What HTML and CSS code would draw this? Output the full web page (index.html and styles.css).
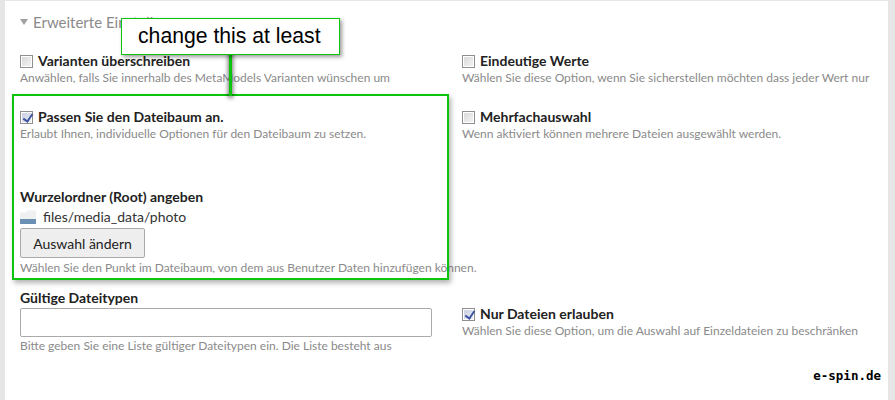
FILE: index.html
```html
<!DOCTYPE html>
<html lang="de">
<head>
<meta charset="utf-8">
<title>Erweiterte Einstellungen</title>
<link rel="stylesheet" href="styles.css">
</head>
<body>
<main class="panel">
  <h2 class="legend"><span class="caret"></span>Erweiterte Einstellungen</h2>
  <div class="grid">
    <div class="field row-a">
      <label class="check"><input type="checkbox">Varianten überschreiben</label>
      <p class="hint">Anwählen, falls Sie innerhalb des MetaModels Varianten wünschen um</p>
    </div>
    <div class="field row-a">
      <label class="check"><input type="checkbox">Eindeutige Werte</label>
      <p class="hint">Wählen Sie diese Option, wenn Sie sicherstellen möchten dass jeder Wert nur</p>
    </div>
    <div class="field row-b">
      <label class="check"><input type="checkbox" checked>Passen Sie den Dateibaum an.</label>
      <p class="hint">Erlaubt Ihnen, individuelle Optionen für den Dateibaum zu setzen.</p>
    </div>
    <div class="field row-b">
      <label class="check"><input type="checkbox">Mehrfachauswahl</label>
      <p class="hint">Wenn aktiviert können mehrere Dateien ausgewählt werden.</p>
    </div>
    <div class="field wide row-c">
      <div class="title">Wurzelordner (Root) angeben</div>
      <div class="path">
        <svg class="folder" width="16" height="14" viewBox="0 0 16 14"><path d="M0 2.5h6l1-2h8l1 2V9H0z" fill="#eef0f2"/><rect x="0" y="9" width="16" height="5" fill="#6a90b4"/></svg>
        <span>files/media_data/photo</span>
      </div>
      <button class="btn" type="button">Auswahl ändern</button>
      <p class="hint hint-wide">Wählen Sie den Punkt im Dateibaum, von dem aus Benutzer Daten hinzufügen können.</p>
    </div>
    <div class="field">
      <div class="title">Gültige Dateitypen</div>
      <input class="text" type="text">
      <p class="hint">Bitte geben Sie eine Liste gültiger Dateitypen ein. Die Liste besteht aus</p>
    </div>
    <div class="field offset">
      <label class="check"><input type="checkbox" checked>Nur Dateien erlauben</label>
      <p class="hint">Wählen Sie diese Option, um die Auswahl auf Einzeldateien zu beschränken</p>
    </div>
  </div>
</main>
<div class="frame"></div>
<div class="stem"></div>
<div class="callout">change this at least</div>
<div class="brand">e-spin.de</div>
</body>
</html>
```
FILE: styles.css
```css
* { box-sizing: border-box; }
html, body { margin: 0; height: 400px; overflow: hidden; }
body {
  background: #e6e6e6;
  padding: 1px 7px 0 5px;
  font-family: Lato, "Open Sans", sans-serif;
  color: #222;
  position: relative;
}
.panel { background: #fff; height: 399px; padding: 13px 15px 0; }
.legend {
  margin: 0;
  font-size: 15px;
  font-weight: 400;
  line-height: 16px;
  color: #8a8a8a;
  display: flex;
  align-items: center;
}
.caret {
  width: 0; height: 0;
  border: 4px solid transparent;
  border-top: 6px solid #a0a0a0;
  border-bottom: 0;
  margin-right: 5px;
}
.grid {
  display: grid;
  grid-template-columns: 442px 1fr;
  margin-top: 23px;
}
.field { min-width: 0; }
.row-a { height: 56px; }
.row-b { height: 80px; }
.wide { grid-column: 1 / -1; height: 101px; }
.offset { padding-top: 16px; }
.check {
  display: flex;
  align-items: center;
  font-size: 14px;
  font-weight: 700;
  line-height: 16px;
  color: #222;
}
.check input {
  appearance: none;
  position: relative;
  width: 13px; height: 13px;
  margin: 0 5px 0 0;
  border: 1px solid #8f8f8f;
  background: linear-gradient(135deg, #d8d8d8, #f4f4f4);
  box-shadow: inset 0 0 0 1px #fff;
}
.check input:checked { background: linear-gradient(135deg, #c8cde0, #eceef6); }
.check input:checked::after {
  content: "";
  position: absolute;
  left: 3.5px; top: 0.5px;
  width: 4px; height: 8px;
  border: solid #3f559f;
  border-width: 0 2px 2px 0;
  transform: rotate(35deg);
}
.title { font-size: 14px; font-weight: 700; line-height: 16px; color: #222; }
.hint {
  margin: 2px 0 0;
  font-size: 12px;
  line-height: 14px;
  color: #8a8a8a;
  white-space: nowrap;
}
.hint-wide { margin-top: 3px; }
.path {
  display: flex;
  align-items: center;
  gap: 7px;
  font-size: 14px;
  line-height: 18px;
  margin-top: 3px;
  color: #333;
}
.btn {
  display: block;
  width: 125px;
  height: 30px;
  margin-top: 2px;
  background: #eee;
  border: 1px solid #aaa;
  border-radius: 2px;
  font: 400 14px Lato, sans-serif;
  color: #222;
  padding: 0;
}
.text {
  display: block;
  width: 412px;
  height: 29px;
  margin-top: 2px;
  border: 1px solid #aaa;
  border-radius: 2px;
  background: #fff;
}
.frame {
  position: absolute;
  left: 12px; top: 94px;
  width: 437px; height: 186px;
  border: 2px solid #0bc40b;
  box-shadow: 2px 3px 5px rgba(0,0,0,.3);
}
.stem {
  position: absolute;
  left: 229px; top: 52px;
  width: 3px; height: 44px;
  background: #0bc40b;
  box-shadow: 0 1px 4px 1px rgba(0,0,0,.55);
}
.callout {
  position: absolute;
  left: 121px; top: 18px;
  width: 219px; height: 37px;
  background: #fff;
  border: 1px solid #0bc40b;
  box-shadow: 2px 2px 4px rgba(0,0,0,.4);
  font: 400 21.2px/34px "Liberation Sans", Arial, sans-serif;
  color: #000;
  padding-left: 16px;
}
.brand {
  position: absolute;
  right: 14px; top: 367px;
  font: 700 12.5px/18px "DejaVu Sans Mono", monospace;
  color: #000;
}
```
